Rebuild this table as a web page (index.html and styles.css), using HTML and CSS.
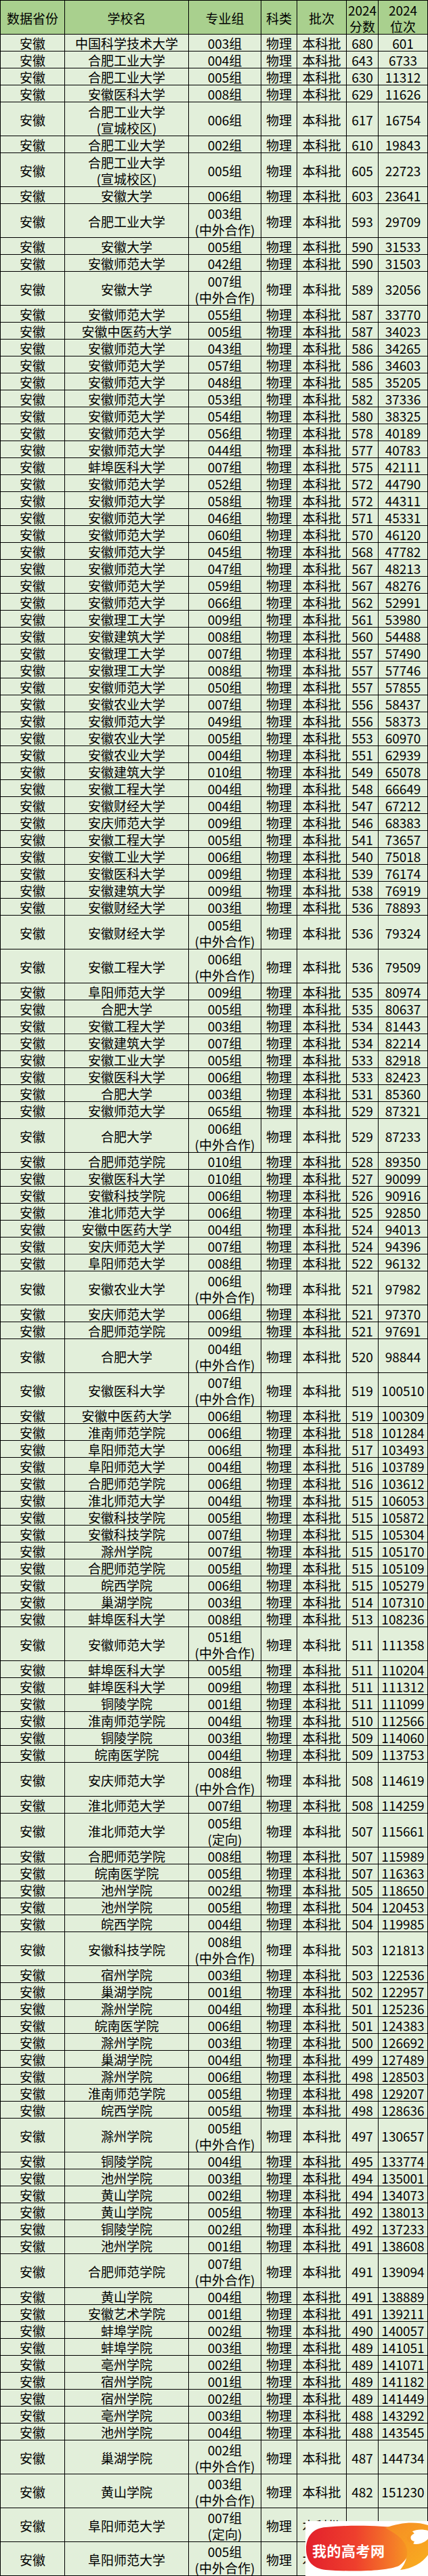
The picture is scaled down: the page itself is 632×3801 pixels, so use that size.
FILE: index.html
```html
<!DOCTYPE html>
<html lang="zh-CN">
<head>
<meta charset="utf-8">
<title>安徽 物理 本科批 2024 分数位次</title>
<link rel="stylesheet" href="styles.css">
</head>
<body>
<div class="page">
<div class="table">
<div class="row head"><div>数据省份</div><div>学校名</div><div>专业组</div><div>科类</div><div>批次</div><div>2024<br>分数</div><div>2024<br>位次</div></div>
<div class="row"><div>安徽</div><div>中国科学技术大学</div><div>003组</div><div>物理</div><div>本科批</div><div>680</div><div>601</div></div>
<div class="row"><div>安徽</div><div>合肥工业大学</div><div>004组</div><div>物理</div><div>本科批</div><div>643</div><div>6733</div></div>
<div class="row"><div>安徽</div><div>合肥工业大学</div><div>005组</div><div>物理</div><div>本科批</div><div>630</div><div>11312</div></div>
<div class="row"><div>安徽</div><div>安徽医科大学</div><div>008组</div><div>物理</div><div>本科批</div><div>629</div><div>11626</div></div>
<div class="row tall"><div>安徽</div><div>合肥工业大学<br>(宣城校区)</div><div>006组</div><div>物理</div><div>本科批</div><div>617</div><div>16754</div></div>
<div class="row"><div>安徽</div><div>合肥工业大学</div><div>002组</div><div>物理</div><div>本科批</div><div>610</div><div>19843</div></div>
<div class="row tall"><div>安徽</div><div>合肥工业大学<br>(宣城校区)</div><div>005组</div><div>物理</div><div>本科批</div><div>605</div><div>22723</div></div>
<div class="row"><div>安徽</div><div>安徽大学</div><div>006组</div><div>物理</div><div>本科批</div><div>603</div><div>23641</div></div>
<div class="row tall"><div>安徽</div><div>合肥工业大学</div><div>003组<br>(中外合作)</div><div>物理</div><div>本科批</div><div>593</div><div>29709</div></div>
<div class="row"><div>安徽</div><div>安徽大学</div><div>005组</div><div>物理</div><div>本科批</div><div>590</div><div>31533</div></div>
<div class="row"><div>安徽</div><div>安徽师范大学</div><div>042组</div><div>物理</div><div>本科批</div><div>590</div><div>31503</div></div>
<div class="row tall"><div>安徽</div><div>安徽大学</div><div>007组<br>(中外合作)</div><div>物理</div><div>本科批</div><div>589</div><div>32056</div></div>
<div class="row"><div>安徽</div><div>安徽师范大学</div><div>055组</div><div>物理</div><div>本科批</div><div>587</div><div>33770</div></div>
<div class="row"><div>安徽</div><div>安徽中医药大学</div><div>005组</div><div>物理</div><div>本科批</div><div>587</div><div>34023</div></div>
<div class="row"><div>安徽</div><div>安徽师范大学</div><div>043组</div><div>物理</div><div>本科批</div><div>586</div><div>34265</div></div>
<div class="row"><div>安徽</div><div>安徽师范大学</div><div>057组</div><div>物理</div><div>本科批</div><div>586</div><div>34603</div></div>
<div class="row"><div>安徽</div><div>安徽师范大学</div><div>048组</div><div>物理</div><div>本科批</div><div>585</div><div>35205</div></div>
<div class="row"><div>安徽</div><div>安徽师范大学</div><div>053组</div><div>物理</div><div>本科批</div><div>582</div><div>37336</div></div>
<div class="row"><div>安徽</div><div>安徽师范大学</div><div>054组</div><div>物理</div><div>本科批</div><div>580</div><div>38325</div></div>
<div class="row"><div>安徽</div><div>安徽师范大学</div><div>056组</div><div>物理</div><div>本科批</div><div>578</div><div>40189</div></div>
<div class="row"><div>安徽</div><div>安徽师范大学</div><div>044组</div><div>物理</div><div>本科批</div><div>577</div><div>40783</div></div>
<div class="row"><div>安徽</div><div>蚌埠医科大学</div><div>007组</div><div>物理</div><div>本科批</div><div>575</div><div>42111</div></div>
<div class="row"><div>安徽</div><div>安徽师范大学</div><div>052组</div><div>物理</div><div>本科批</div><div>572</div><div>44790</div></div>
<div class="row"><div>安徽</div><div>安徽师范大学</div><div>058组</div><div>物理</div><div>本科批</div><div>572</div><div>44311</div></div>
<div class="row"><div>安徽</div><div>安徽师范大学</div><div>046组</div><div>物理</div><div>本科批</div><div>571</div><div>45331</div></div>
<div class="row"><div>安徽</div><div>安徽师范大学</div><div>060组</div><div>物理</div><div>本科批</div><div>570</div><div>46120</div></div>
<div class="row"><div>安徽</div><div>安徽师范大学</div><div>045组</div><div>物理</div><div>本科批</div><div>568</div><div>47782</div></div>
<div class="row"><div>安徽</div><div>安徽师范大学</div><div>047组</div><div>物理</div><div>本科批</div><div>567</div><div>48213</div></div>
<div class="row"><div>安徽</div><div>安徽师范大学</div><div>059组</div><div>物理</div><div>本科批</div><div>567</div><div>48276</div></div>
<div class="row"><div>安徽</div><div>安徽师范大学</div><div>066组</div><div>物理</div><div>本科批</div><div>562</div><div>52991</div></div>
<div class="row"><div>安徽</div><div>安徽理工大学</div><div>009组</div><div>物理</div><div>本科批</div><div>561</div><div>53980</div></div>
<div class="row"><div>安徽</div><div>安徽建筑大学</div><div>008组</div><div>物理</div><div>本科批</div><div>560</div><div>54488</div></div>
<div class="row"><div>安徽</div><div>安徽理工大学</div><div>007组</div><div>物理</div><div>本科批</div><div>557</div><div>57490</div></div>
<div class="row"><div>安徽</div><div>安徽理工大学</div><div>008组</div><div>物理</div><div>本科批</div><div>557</div><div>57746</div></div>
<div class="row"><div>安徽</div><div>安徽师范大学</div><div>050组</div><div>物理</div><div>本科批</div><div>557</div><div>57855</div></div>
<div class="row"><div>安徽</div><div>安徽农业大学</div><div>007组</div><div>物理</div><div>本科批</div><div>556</div><div>58437</div></div>
<div class="row"><div>安徽</div><div>安徽师范大学</div><div>049组</div><div>物理</div><div>本科批</div><div>556</div><div>58373</div></div>
<div class="row"><div>安徽</div><div>安徽农业大学</div><div>005组</div><div>物理</div><div>本科批</div><div>553</div><div>60970</div></div>
<div class="row"><div>安徽</div><div>安徽农业大学</div><div>004组</div><div>物理</div><div>本科批</div><div>551</div><div>62939</div></div>
<div class="row"><div>安徽</div><div>安徽建筑大学</div><div>010组</div><div>物理</div><div>本科批</div><div>549</div><div>65078</div></div>
<div class="row"><div>安徽</div><div>安徽工程大学</div><div>004组</div><div>物理</div><div>本科批</div><div>548</div><div>66649</div></div>
<div class="row"><div>安徽</div><div>安徽财经大学</div><div>004组</div><div>物理</div><div>本科批</div><div>547</div><div>67212</div></div>
<div class="row"><div>安徽</div><div>安庆师范大学</div><div>009组</div><div>物理</div><div>本科批</div><div>546</div><div>68383</div></div>
<div class="row"><div>安徽</div><div>安徽工程大学</div><div>005组</div><div>物理</div><div>本科批</div><div>541</div><div>73657</div></div>
<div class="row"><div>安徽</div><div>安徽工业大学</div><div>006组</div><div>物理</div><div>本科批</div><div>540</div><div>75018</div></div>
<div class="row"><div>安徽</div><div>安徽医科大学</div><div>009组</div><div>物理</div><div>本科批</div><div>539</div><div>76174</div></div>
<div class="row"><div>安徽</div><div>安徽建筑大学</div><div>009组</div><div>物理</div><div>本科批</div><div>538</div><div>76919</div></div>
<div class="row"><div>安徽</div><div>安徽财经大学</div><div>003组</div><div>物理</div><div>本科批</div><div>536</div><div>78893</div></div>
<div class="row tall"><div>安徽</div><div>安徽财经大学</div><div>005组<br>(中外合作)</div><div>物理</div><div>本科批</div><div>536</div><div>79324</div></div>
<div class="row tall"><div>安徽</div><div>安徽工程大学</div><div>006组<br>(中外合作)</div><div>物理</div><div>本科批</div><div>536</div><div>79509</div></div>
<div class="row"><div>安徽</div><div>阜阳师范大学</div><div>009组</div><div>物理</div><div>本科批</div><div>535</div><div>80974</div></div>
<div class="row"><div>安徽</div><div>合肥大学</div><div>005组</div><div>物理</div><div>本科批</div><div>535</div><div>80637</div></div>
<div class="row"><div>安徽</div><div>安徽工程大学</div><div>003组</div><div>物理</div><div>本科批</div><div>534</div><div>81443</div></div>
<div class="row"><div>安徽</div><div>安徽建筑大学</div><div>007组</div><div>物理</div><div>本科批</div><div>534</div><div>82214</div></div>
<div class="row"><div>安徽</div><div>安徽工业大学</div><div>005组</div><div>物理</div><div>本科批</div><div>533</div><div>82918</div></div>
<div class="row"><div>安徽</div><div>安徽医科大学</div><div>006组</div><div>物理</div><div>本科批</div><div>533</div><div>82423</div></div>
<div class="row"><div>安徽</div><div>合肥大学</div><div>003组</div><div>物理</div><div>本科批</div><div>531</div><div>85360</div></div>
<div class="row"><div>安徽</div><div>安徽师范大学</div><div>065组</div><div>物理</div><div>本科批</div><div>529</div><div>87321</div></div>
<div class="row tall"><div>安徽</div><div>合肥大学</div><div>006组<br>(中外合作)</div><div>物理</div><div>本科批</div><div>529</div><div>87233</div></div>
<div class="row"><div>安徽</div><div>合肥师范学院</div><div>010组</div><div>物理</div><div>本科批</div><div>528</div><div>89350</div></div>
<div class="row"><div>安徽</div><div>安徽医科大学</div><div>010组</div><div>物理</div><div>本科批</div><div>527</div><div>90099</div></div>
<div class="row"><div>安徽</div><div>安徽科技学院</div><div>006组</div><div>物理</div><div>本科批</div><div>526</div><div>90916</div></div>
<div class="row"><div>安徽</div><div>淮北师范大学</div><div>006组</div><div>物理</div><div>本科批</div><div>525</div><div>92850</div></div>
<div class="row"><div>安徽</div><div>安徽中医药大学</div><div>004组</div><div>物理</div><div>本科批</div><div>524</div><div>94013</div></div>
<div class="row"><div>安徽</div><div>安庆师范大学</div><div>007组</div><div>物理</div><div>本科批</div><div>524</div><div>94396</div></div>
<div class="row"><div>安徽</div><div>阜阳师范大学</div><div>008组</div><div>物理</div><div>本科批</div><div>522</div><div>96132</div></div>
<div class="row tall"><div>安徽</div><div>安徽农业大学</div><div>006组<br>(中外合作)</div><div>物理</div><div>本科批</div><div>521</div><div>97982</div></div>
<div class="row"><div>安徽</div><div>安庆师范大学</div><div>006组</div><div>物理</div><div>本科批</div><div>521</div><div>97370</div></div>
<div class="row"><div>安徽</div><div>合肥师范学院</div><div>009组</div><div>物理</div><div>本科批</div><div>521</div><div>97691</div></div>
<div class="row tall"><div>安徽</div><div>合肥大学</div><div>004组<br>(中外合作)</div><div>物理</div><div>本科批</div><div>520</div><div>98844</div></div>
<div class="row tall"><div>安徽</div><div>安徽医科大学</div><div>007组<br>(中外合作)</div><div>物理</div><div>本科批</div><div>519</div><div>100510</div></div>
<div class="row"><div>安徽</div><div>安徽中医药大学</div><div>006组</div><div>物理</div><div>本科批</div><div>519</div><div>100309</div></div>
<div class="row"><div>安徽</div><div>淮南师范学院</div><div>006组</div><div>物理</div><div>本科批</div><div>518</div><div>101284</div></div>
<div class="row"><div>安徽</div><div>阜阳师范大学</div><div>006组</div><div>物理</div><div>本科批</div><div>517</div><div>103493</div></div>
<div class="row"><div>安徽</div><div>阜阳师范大学</div><div>004组</div><div>物理</div><div>本科批</div><div>516</div><div>103789</div></div>
<div class="row"><div>安徽</div><div>合肥师范学院</div><div>006组</div><div>物理</div><div>本科批</div><div>516</div><div>103612</div></div>
<div class="row"><div>安徽</div><div>淮北师范大学</div><div>004组</div><div>物理</div><div>本科批</div><div>515</div><div>106053</div></div>
<div class="row"><div>安徽</div><div>安徽科技学院</div><div>005组</div><div>物理</div><div>本科批</div><div>515</div><div>105872</div></div>
<div class="row"><div>安徽</div><div>安徽科技学院</div><div>007组</div><div>物理</div><div>本科批</div><div>515</div><div>105304</div></div>
<div class="row"><div>安徽</div><div>滁州学院</div><div>007组</div><div>物理</div><div>本科批</div><div>515</div><div>105170</div></div>
<div class="row"><div>安徽</div><div>合肥师范学院</div><div>005组</div><div>物理</div><div>本科批</div><div>515</div><div>105109</div></div>
<div class="row"><div>安徽</div><div>皖西学院</div><div>006组</div><div>物理</div><div>本科批</div><div>515</div><div>105279</div></div>
<div class="row"><div>安徽</div><div>巢湖学院</div><div>003组</div><div>物理</div><div>本科批</div><div>514</div><div>107310</div></div>
<div class="row"><div>安徽</div><div>蚌埠医科大学</div><div>008组</div><div>物理</div><div>本科批</div><div>513</div><div>108236</div></div>
<div class="row tall"><div>安徽</div><div>安徽师范大学</div><div>051组<br>(中外合作)</div><div>物理</div><div>本科批</div><div>511</div><div>111358</div></div>
<div class="row"><div>安徽</div><div>蚌埠医科大学</div><div>005组</div><div>物理</div><div>本科批</div><div>511</div><div>110204</div></div>
<div class="row"><div>安徽</div><div>蚌埠医科大学</div><div>009组</div><div>物理</div><div>本科批</div><div>511</div><div>111312</div></div>
<div class="row"><div>安徽</div><div>铜陵学院</div><div>001组</div><div>物理</div><div>本科批</div><div>511</div><div>111099</div></div>
<div class="row"><div>安徽</div><div>淮南师范学院</div><div>004组</div><div>物理</div><div>本科批</div><div>510</div><div>112566</div></div>
<div class="row"><div>安徽</div><div>铜陵学院</div><div>003组</div><div>物理</div><div>本科批</div><div>509</div><div>114060</div></div>
<div class="row"><div>安徽</div><div>皖南医学院</div><div>004组</div><div>物理</div><div>本科批</div><div>509</div><div>113753</div></div>
<div class="row tall"><div>安徽</div><div>安庆师范大学</div><div>008组<br>(中外合作)</div><div>物理</div><div>本科批</div><div>508</div><div>114619</div></div>
<div class="row"><div>安徽</div><div>淮北师范大学</div><div>007组</div><div>物理</div><div>本科批</div><div>508</div><div>114259</div></div>
<div class="row tall"><div>安徽</div><div>淮北师范大学</div><div>005组<br>(定向)</div><div>物理</div><div>本科批</div><div>507</div><div>115661</div></div>
<div class="row"><div>安徽</div><div>合肥师范学院</div><div>008组</div><div>物理</div><div>本科批</div><div>507</div><div>115989</div></div>
<div class="row"><div>安徽</div><div>皖南医学院</div><div>005组</div><div>物理</div><div>本科批</div><div>507</div><div>116363</div></div>
<div class="row"><div>安徽</div><div>池州学院</div><div>002组</div><div>物理</div><div>本科批</div><div>505</div><div>118650</div></div>
<div class="row"><div>安徽</div><div>池州学院</div><div>005组</div><div>物理</div><div>本科批</div><div>504</div><div>120453</div></div>
<div class="row"><div>安徽</div><div>皖西学院</div><div>004组</div><div>物理</div><div>本科批</div><div>504</div><div>119985</div></div>
<div class="row tall"><div>安徽</div><div>安徽科技学院</div><div>008组<br>(中外合作)</div><div>物理</div><div>本科批</div><div>503</div><div>121813</div></div>
<div class="row"><div>安徽</div><div>宿州学院</div><div>003组</div><div>物理</div><div>本科批</div><div>503</div><div>122536</div></div>
<div class="row"><div>安徽</div><div>巢湖学院</div><div>001组</div><div>物理</div><div>本科批</div><div>502</div><div>122957</div></div>
<div class="row"><div>安徽</div><div>滁州学院</div><div>004组</div><div>物理</div><div>本科批</div><div>501</div><div>125236</div></div>
<div class="row"><div>安徽</div><div>皖南医学院</div><div>006组</div><div>物理</div><div>本科批</div><div>501</div><div>124383</div></div>
<div class="row"><div>安徽</div><div>滁州学院</div><div>003组</div><div>物理</div><div>本科批</div><div>500</div><div>126692</div></div>
<div class="row"><div>安徽</div><div>巢湖学院</div><div>004组</div><div>物理</div><div>本科批</div><div>499</div><div>127489</div></div>
<div class="row"><div>安徽</div><div>滁州学院</div><div>006组</div><div>物理</div><div>本科批</div><div>498</div><div>128503</div></div>
<div class="row"><div>安徽</div><div>淮南师范学院</div><div>005组</div><div>物理</div><div>本科批</div><div>498</div><div>129207</div></div>
<div class="row"><div>安徽</div><div>皖西学院</div><div>005组</div><div>物理</div><div>本科批</div><div>498</div><div>128636</div></div>
<div class="row tall"><div>安徽</div><div>滁州学院</div><div>005组<br>(中外合作)</div><div>物理</div><div>本科批</div><div>497</div><div>130657</div></div>
<div class="row"><div>安徽</div><div>铜陵学院</div><div>004组</div><div>物理</div><div>本科批</div><div>495</div><div>133774</div></div>
<div class="row"><div>安徽</div><div>池州学院</div><div>003组</div><div>物理</div><div>本科批</div><div>494</div><div>135001</div></div>
<div class="row"><div>安徽</div><div>黄山学院</div><div>002组</div><div>物理</div><div>本科批</div><div>494</div><div>134073</div></div>
<div class="row"><div>安徽</div><div>黄山学院</div><div>005组</div><div>物理</div><div>本科批</div><div>492</div><div>138013</div></div>
<div class="row"><div>安徽</div><div>铜陵学院</div><div>002组</div><div>物理</div><div>本科批</div><div>492</div><div>137233</div></div>
<div class="row"><div>安徽</div><div>池州学院</div><div>001组</div><div>物理</div><div>本科批</div><div>491</div><div>138608</div></div>
<div class="row tall"><div>安徽</div><div>合肥师范学院</div><div>007组<br>(中外合作)</div><div>物理</div><div>本科批</div><div>491</div><div>139094</div></div>
<div class="row"><div>安徽</div><div>黄山学院</div><div>004组</div><div>物理</div><div>本科批</div><div>491</div><div>138889</div></div>
<div class="row"><div>安徽</div><div>安徽艺术学院</div><div>001组</div><div>物理</div><div>本科批</div><div>491</div><div>139211</div></div>
<div class="row"><div>安徽</div><div>蚌埠学院</div><div>002组</div><div>物理</div><div>本科批</div><div>490</div><div>140057</div></div>
<div class="row"><div>安徽</div><div>蚌埠学院</div><div>003组</div><div>物理</div><div>本科批</div><div>489</div><div>141051</div></div>
<div class="row"><div>安徽</div><div>亳州学院</div><div>002组</div><div>物理</div><div>本科批</div><div>489</div><div>141071</div></div>
<div class="row"><div>安徽</div><div>宿州学院</div><div>001组</div><div>物理</div><div>本科批</div><div>489</div><div>141182</div></div>
<div class="row"><div>安徽</div><div>宿州学院</div><div>002组</div><div>物理</div><div>本科批</div><div>489</div><div>141449</div></div>
<div class="row"><div>安徽</div><div>亳州学院</div><div>003组</div><div>物理</div><div>本科批</div><div>488</div><div>143292</div></div>
<div class="row"><div>安徽</div><div>池州学院</div><div>004组</div><div>物理</div><div>本科批</div><div>488</div><div>143545</div></div>
<div class="row tall"><div>安徽</div><div>巢湖学院</div><div>002组<br>(中外合作)</div><div>物理</div><div>本科批</div><div>487</div><div>144734</div></div>
<div class="row tall"><div>安徽</div><div>黄山学院</div><div>003组<br>(中外合作)</div><div>物理</div><div>本科批</div><div>482</div><div>151230</div></div>
<div class="row tall"><div>安徽</div><div>阜阳师范大学</div><div>007组<br>(定向)</div><div>物理</div><div>本科批</div><div>478</div><div>155844</div></div>
<div class="row tall"><div>安徽</div><div>阜阳师范大学</div><div>005组<br>(中外合作)</div><div>物理</div><div>本科批</div><div>476</div><div>158232</div></div>
</div>
<div class="watermark">
<svg width="181" height="81" viewBox="0 0 181 81" xmlns="http://www.w3.org/2000/svg">
<defs>
<linearGradient id="wg" x1="0" y1="0" x2="1" y2="0">
<stop offset="0" stop-color="#e2202c"/>
<stop offset="0.45" stop-color="#ee3f2d"/>
<stop offset="0.8" stop-color="#f47b28"/>
<stop offset="1" stop-color="#f7a21f"/>
</linearGradient>
<linearGradient id="fg" x1="0" y1="0" x2="1" y2="1">
<stop offset="0" stop-color="#f58a24"/>
<stop offset="1" stop-color="#f9b020"/>
</linearGradient>
</defs>
<rect width="181" height="81" fill="#ffffff"/>
<path d="M30,9 C70,5 110,7 142,10 C160,12 166,20 160,32 C155,44 150,58 138,66 C120,74 70,75 30,72 C10,70 1,58 1,41 C1,22 12,10 30,9 Z" fill="url(#wg)"/>
<path d="M118,10 C140,2 162,0 181,6 L181,14 C168,10 152,14 150,24 C149,32 160,36 170,33 C176,31 180,28 181,26 L181,50 C172,62 158,70 140,72 C150,60 154,44 146,32 C140,22 128,16 118,10 Z" fill="url(#fg)"/>
<path d="M156,22 C160,16 170,16 176,20 C170,20 164,24 162,30 C158,30 154,27 156,22 Z" fill="#ffffff"/>
<text x="10" y="52" class="wm-text">我的高考网</text>
</svg>
</div>
</div>
</body>
</html>
```
FILE: styles.css
```css
html, body {
  margin: 0;
  padding: 0;
  background: #ffffff;
}

.page {
  position: relative;
  width: 632px;
}

.table {
  width: 632px;
  box-sizing: border-box;
  border-top: 1px solid #000;
  border-left: 1px solid #000;
  font-family: "Noto Sans CJK SC", "Noto Sans", sans-serif;
  font-size: 19px;
  color: #000;
  background: #e2efda;
}

.row {
  display: grid;
  grid-template-columns: 95px 183px 107px 53px 73px 47px 73px;
  height: 25px;
}

.row.tall {
  height: 50px;
}

.row > div {
  box-sizing: border-box;
  border-right: 1px solid #000;
  border-bottom: 1px solid #000;
  display: flex;
  align-items: center;
  justify-content: center;
  text-align: center;
  line-height: 24px;
  padding-top: 2px;
  white-space: nowrap;
  overflow: hidden;
}

.row.head {
  height: 50px;
  background: #a9d08e;
}

.row.head > div {
  line-height: 24px;
}

.watermark {
  position: absolute;
  right: 0;
  bottom: 0;
  width: 181px;
  height: 81px;
}

.watermark svg {
  display: block;
}

.wm-text {
  font-family: "Noto Sans CJK SC", sans-serif;
  font-weight: 700;
  font-size: 21px;
  fill: #ffffff;
  letter-spacing: 0.5px;
}
```
